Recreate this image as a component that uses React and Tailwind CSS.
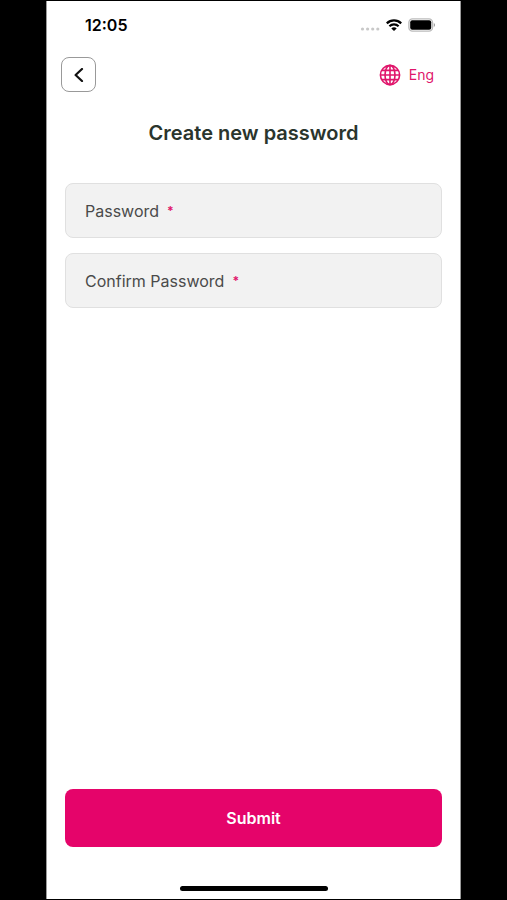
import { useState } from 'react'

const FIELDS = [
  { id: 'password', label: 'Password' },
  { id: 'confirmPassword', label: 'Confirm Password' },
]

function SignalDots() {
  return (
    <svg width="20" height="4" viewBox="0 0 20 4" fill="#c8c8c8" aria-hidden="true">
      <circle cx="2.5" cy="2" r="1.6" />
      <circle cx="7.6" cy="2" r="1.6" />
      <circle cx="12.7" cy="2" r="1.6" />
      <circle cx="17.8" cy="2" r="1.6" />
    </svg>
  )
}

function WifiIcon() {
  return (
    <svg width="16" height="12" viewBox="0 0 16 12" fill="none" stroke="#000" strokeWidth="2.2" aria-hidden="true">
      <path d="M0.8 4.4C4.8 0.4 11.2 0.4 15.2 4.4" />
      <path d="M3.4 7.2C6 4.7 10 4.7 12.6 7.2" />
      <path d="M8 12L5.3 9.4C6.8 8 9.2 8 10.7 9.4Z" fill="#000" stroke="none" />
    </svg>
  )
}

function BatteryIcon() {
  return (
    <svg width="28" height="14" viewBox="0 0 28 14" fill="none" aria-hidden="true">
      <rect x="0.9" y="0.9" width="23.6" height="12.2" rx="3.6" stroke="#bcbcbc" strokeWidth="1.4" />
      <rect x="2.2" y="2.2" width="21" height="9.6" rx="2" fill="#000" />
      <path d="M25.8 5C27.4 5.6 27.4 8.4 25.8 9Z" fill="#999" />
    </svg>
  )
}

function GlobeIcon() {
  return (
    <svg width="22" height="22" viewBox="0 0 22 22" fill="none" stroke="#e0156b" strokeWidth="1.6" aria-hidden="true">
      <circle cx="11" cy="11" r="9.6" />
      <ellipse cx="11" cy="11" rx="5" ry="9.6" />
      <path d="M11 1.4V20.6M1.4 11H20.6M2.8 6.4H19.2M2.8 15.6H19.2" />
    </svg>
  )
}

function StatusBar() {
  return (
    <div className="flex h-12 items-center justify-between pr-6 pl-[38px]">
      <span className="text-base font-semibold text-black">12:05</span>
      <div className="flex items-center gap-1.5">
        <div className="pt-2">
          <SignalDots />
        </div>
        <WifiIcon />
        <BatteryIcon />
      </div>
    </div>
  )
}

function PasswordField({ id, label, value, onChange }) {
  return (
    <div className="flex h-[55px] items-center gap-2 rounded-lg border border-[#e0e0e0] bg-[#f2f2f2] px-[19px]">
      <label htmlFor={id} className="flex shrink-0 items-center gap-2 text-base text-[#4a4a4a]">
        {label}
        <span className="text-xs font-bold text-[#e0156b]">*</span>
      </label>
      <input
        id={id}
        type="password"
        required
        value={value}
        onChange={onChange}
        className="h-full min-w-0 flex-1 bg-transparent text-base text-[#2b2f2b] outline-none"
      />
    </div>
  )
}

export default function App() {
  const [values, setValues] = useState({ password: '', confirmPassword: '' })

  const handleChange = (e) => setValues({ ...values, [e.target.id]: e.target.value })

  return (
    <div className="min-h-screen bg-black px-[46px] py-px font-['Inter',sans-serif]">
      <div className="flex min-h-[calc(100vh-2px)] flex-col border-x border-[#9a9a9a] bg-white">
        <StatusBar />

        {/* Header */}
        <header className="flex items-center justify-between pt-2 pr-[26px] pl-3.5">
          <button
            type="button"
            aria-label="Back"
            className="flex size-[35px] items-center justify-center rounded-lg border border-[#999]"
          >
            <svg width="10" height="14" viewBox="0 0 10 14" fill="none" stroke="#111" strokeWidth="2.2" aria-hidden="true">
              <path d="M8 1L1.6 7L8 13" strokeLinecap="round" strokeLinejoin="round" />
            </svg>
          </button>
          <button type="button" className="flex items-center gap-2 text-sm text-[#e0156b]">
            <GlobeIcon />
            Eng
          </button>
        </header>

        {/* Form */}
        <form className="flex flex-1 flex-col px-[18px] pt-[27px]" onSubmit={(e) => e.preventDefault()}>
          <h1 className="text-center text-xl font-semibold text-[#2a352d]">Create new password</h1>

          <div className="mt-9 flex flex-col gap-[15px]">
            {FIELDS.map((field) => (
              <PasswordField
                key={field.id}
                id={field.id}
                label={field.label}
                value={values[field.id]}
                onChange={handleChange}
              />
            ))}
          </div>

          <button type="submit" className="mt-auto h-[58px] rounded-lg bg-[#e5046a] text-base font-semibold text-white">
            Submit
          </button>
        </form>

        {/* Home indicator */}
        <div className="flex justify-center pt-[39px] pb-2">
          <div className="h-[5px] w-[148px] rounded-full bg-black" />
        </div>
      </div>
    </div>
  )
}
